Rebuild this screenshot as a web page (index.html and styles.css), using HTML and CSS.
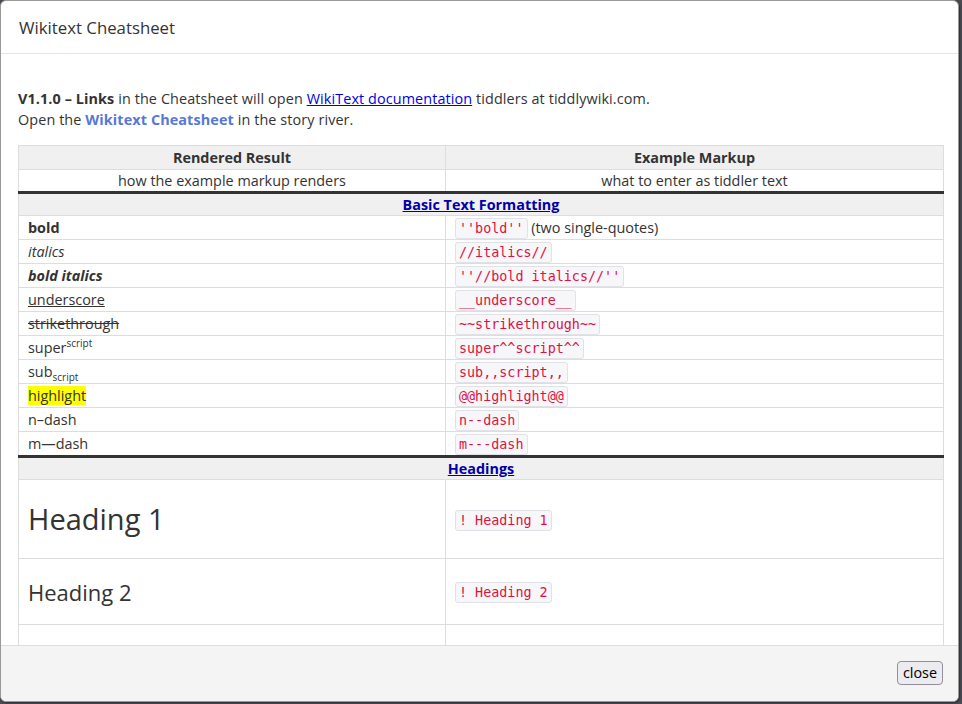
FILE: index.html
```html
<!DOCTYPE html>
<html>
<head>
<meta charset="utf-8">
<link rel="stylesheet" href="styles.css">
</head>
<body>
<div class="modal">
  <div class="modal-header">Wikitext Cheatsheet</div>
  <div class="modal-body">
    <p class="intro"><strong>V1.1.0 – Links</strong> in the Cheatsheet will open <a class="ext" href="#">WikiText documentation</a> tiddlers at tiddlywiki.com.<br>Open the <a class="tc-link" href="#">Wikitext Cheatsheet</a> in the story river.</p>
    <table class="sheet">
      <colgroup><col class="c1"><col class="c2"></colgroup>
      <tr class="head"><th>Rendered Result</th><th>Example Markup</th></tr>
      <tr class="desc"><td>how the example markup renders</td><td>what to enter as tiddler text</td></tr>
      <tr class="section"><td colspan="2"><a href="#">Basic Text Formatting</a></td></tr>
      <tr><td><strong>bold</strong></td><td><code>''bold''</code> (two single-quotes)</td></tr>
      <tr><td><em>italics</em></td><td><code>//italics//</code></td></tr>
      <tr><td><strong><em>bold italics</em></strong></td><td><code>''//bold italics//''</code></td></tr>
      <tr><td><u>underscore</u></td><td><code>__underscore__</code></td></tr>
      <tr><td><s>strikethrough</s></td><td><code>~~strikethrough~~</code></td></tr>
      <tr><td>super<sup>script</sup></td><td><code>super^^script^^</code></td></tr>
      <tr><td>sub<sub>script</sub></td><td><code>sub,,script,,</code></td></tr>
      <tr><td><mark>highlight</mark></td><td><code>@@highlight@@</code></td></tr>
      <tr><td>n–dash</td><td><code>n--dash</code></td></tr>
      <tr class="last"><td>m—dash</td><td><code>m---dash</code></td></tr>
      <tr class="section"><td colspan="2"><a href="#">Headings</a></td></tr>
      <tr class="h1row"><td><h1>Heading 1</h1></td><td><code>! Heading 1</code></td></tr>
      <tr class="h2row"><td><h2>Heading 2</h2></td><td><code>! Heading 2</code></td></tr>
      <tr class="h3row"><td><h3>Heading 3</h3></td><td><code>!!! Heading 3</code></td></tr>
    </table>
  </div>
  <div class="modal-footer"><button class="close">close</button></div>
</div>
</body>
</html>
```
FILE: styles.css
```css
html, body {
  margin: 0;
  padding: 0;
  height: 100%;
}
body {
  background: #4a4a55;
  font-family: "Open Sans", "Noto Sans", sans-serif;
  font-size: 14.4px;
  color: #333;
}
.modal {
  width: 959px;
  height: 702px;
  box-sizing: border-box;
  border: 1px solid #999;
  border-radius: 6px;
  background: #fff;
  display: flex;
  flex-direction: column;
  overflow: hidden;
  box-shadow: 1px 1px 2px rgba(0,0,0,0.4);
}
.modal-header {
  padding: 15px 18px 13px 18px;
  line-height: 24px;
  font-size: 16.8px;
  border-bottom: 1px solid #e5e5e5;
  flex: none;
}
.modal-body {
  flex: 1;
  overflow: hidden;
  padding: 34px 16px 0 17px;
}
.intro {
  margin: 0 0 15px 0;
  line-height: 21px;
  letter-spacing: 0.1px;
}
.intro strong { font-weight: 700; }
a.ext { color: #0000ee; }
a.tc-link {
  color: #5778d8;
  font-weight: 700;
  text-decoration: none;
}
.sheet {
  width: 926px;
  border-collapse: collapse;
  table-layout: fixed;
}
.c1 { width: 427px; }
.sheet th, .sheet td {
  border: 1px solid #ddd;
  padding: 1px 9px;
  line-height: 21px;
  height: 21px;
  text-align: left;
  vertical-align: middle;
}
.sheet tr.head th {
  background: #f0f0f0;
  text-align: center;
  font-weight: 700;
}
.sheet tr.desc td {
  text-align: center;
  padding: 0 9px;
  border-bottom: 3px solid #333;
}
.sheet tr.section td {
  background: #f0f0f0;
  text-align: center;
  font-weight: 700;
  padding: 0 9px;
}
.sheet tr.section a { color: #0000aa; }
.sheet tr.last td { border-bottom: 3px solid #333; }
code {
  font-family: "DejaVu Sans Mono", "Liberation Mono", monospace;
  font-size: 13.4px;
  line-height: 14px;
  color: #dd1144;
  background: #f7f7f9;
  border: 1px solid #e1e1e8;
  border-radius: 3px;
  padding: 2px 3px;
}
sup, sub { font-size: 10px; line-height: 0; }
mark { background: #ffff00; color: #333; }
h1, h2, h3 {
  font-weight: 400;
  margin: 0;
}
h1 { font-size: 29px; line-height: 40px; }
h2 { font-size: 22px; line-height: 30px; }
h3 { font-size: 18px; line-height: 26px; }
.sheet tr.h1row td { height: 78px; padding-top: 0; padding-bottom: 0; }
.sheet tr.h2row td { height: 65px; padding-top: 0; padding-bottom: 0; }
.sheet tr.h3row td { height: 62px; padding-top: 0; padding-bottom: 0; }
.modal-footer {
  flex: none;
  height: 56px;
  box-sizing: border-box;
  border-top: 1px solid #ddd;
  background: #f4f4f4;
  display: flex;
  justify-content: flex-end;
  align-items: flex-start;
  padding: 15px 15px 0 0;
}
.close {
  font-family: "Open Sans", "Noto Sans", sans-serif;
  font-size: 14.4px;
  color: #000;
  background: #ebebf0;
  border: 1px solid #8f8f9d;
  border-radius: 4px;
  height: 24px;
  width: 46px;
  padding: 0;
  line-height: 22px;
}
```
